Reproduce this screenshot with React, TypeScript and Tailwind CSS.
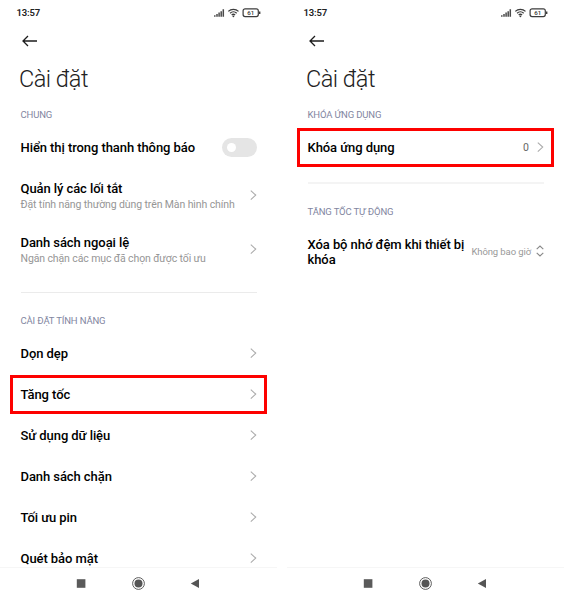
import type { ReactNode } from "react";

function StatusBar() {
  return (
    <div className="flex h-[25px] shrink-0 items-center justify-between pl-[16.5px] pr-[16px]">
      <span className="text-[9.5px] font-semibold leading-none tracking-[-0.15px] text-[#222]">13:57</span>
      <svg width="48" height="11" viewBox="0 0 48 11" fill="none">
        <path d="M1.8 8.2v1.6M4 7v2.8M6.1 5.6v4.2M8.2 4.2v5.6M10.3 2.2v7.6" stroke="#4a4a4a" strokeWidth="1.5" />
        <path d="M15.3 4.4a7.3 7.3 0 0 1 10.2 0M17.1 6.3a4.7 4.7 0 0 1 6.6 0M18.7 8a2.5 2.5 0 0 1 3.4 0" stroke="#3c3c3c" strokeWidth="1.3" />
        <circle cx="20.4" cy="9.3" r="0.9" fill="#3c3c3c" />
        <rect x="30.1" y="1.8" width="15.2" height="7.8" rx="2" stroke="#3c3c3c" strokeWidth="1.2" />
        <path d="M46.7 4.4v2.6" stroke="#3c3c3c" strokeWidth="1.4" />
        <text x="37.7" y="8" textAnchor="middle" fontSize="6.2" fontWeight="500" fill="#333" fontFamily="Roboto, sans-serif">61</text>
      </svg>
    </div>
  );
}

function Chevron() {
  return (
    <svg className="shrink-0" width="7" height="11" viewBox="0 0 7 11" fill="none">
      <path d="M0.8 0.6L5.7 5.1L0.8 9.6" stroke="#ababab" strokeWidth="1.1" />
    </svg>
  );
}

function Highlight() {
  return <div className="pointer-events-none absolute inset-x-[10px] inset-y-px border-[3px] border-[#fd0100]" />;
}

function Label({ className, children }: { className: string; children: ReactNode }) {
  return (
    <div className={`flex shrink-0 items-center pl-[20.5px] text-[9.5px] leading-none tracking-[-0.14px] text-[#82869f] ${className}`}>
      {children}
    </div>
  );
}

type RowProps = {
  title: ReactNode;
  sub?: string;
  height?: string;
  highlight?: boolean;
  children?: ReactNode;
};

function Row({ title, sub, height = "h-[41px]", highlight, children }: RowProps) {
  return (
    <div className={`relative flex shrink-0 items-center justify-between pl-[20.5px] pr-[20px] ${height}`}>
      <div className={sub ? "pt-[2px]" : ""}>
        <div className="whitespace-nowrap text-[13px] font-medium leading-[15px] tracking-[-0.075px] text-black">{title}</div>
        {sub && <div className="mt-px whitespace-nowrap text-[10.5px] leading-[15px] tracking-[-0.11px] text-[#969696]">{sub}</div>}
      </div>
      {children ?? <Chevron />}
      {highlight && <Highlight />}
    </div>
  );
}

function NavBar() {
  return (
    <div className="flex h-[33px] shrink-0 items-center border-t border-[#f6f6f6] pl-[76px]">
      <svg width="124" height="14" viewBox="0 0 124 14" fill="none">
        <rect x="0.8" y="2.2" width="8.6" height="8.6" fill="#5a5a5a" />
        <circle cx="62.5" cy="6.5" r="5.9" stroke="#4c4c4c" strokeWidth="0.9" />
        <circle cx="62.5" cy="6.5" r="4" fill="#555" />
        <path d="M114.8 6.5L123 2V11Z" fill="#555" />
      </svg>
    </div>
  );
}

function Phone({ children }: { children: ReactNode }) {
  return (
    <div className="flex h-[600px] w-[277px] shrink-0 flex-col overflow-hidden bg-white">
      <StatusBar />
      <div className="flex h-8 shrink-0 items-center pl-[22px]">
        <svg width="16" height="12" viewBox="0 0 16 12" fill="none">
          <path d="M15 6H1M6 1L1 6L6 11" stroke="#1c1c1c" strokeWidth="1.3" />
        </svg>
      </div>
      <h1 className="flex h-11 shrink-0 items-center pl-[19px] pt-px text-[23.5px] font-light leading-none tracking-[-0.5px] text-[#222]">Cài đặt</h1>
      <div className="flex min-h-0 flex-1 flex-col overflow-hidden">{children}</div>
      <NavBar />
    </div>
  );
}

export default function App() {
  return (
    <div className="flex h-[600px] w-[564px] gap-[10px] overflow-hidden bg-white font-[Roboto,sans-serif]">
      <Phone>
        <Label className="h-[26px] pt-[2px]">CHUNG</Label>
        <Row title="Hiển thị trong thanh thông báo">
          <div className="flex h-[19px] w-[35px] items-center rounded-full bg-[#e5e5e5] pl-[5px]">
            <div className="size-[9px] rounded-full bg-white" />
          </div>
        </Row>
        <Row title="Quản lý các lối tắt" sub="Đặt tính năng thường dùng trên Màn hình chính" height="h-[54px]" />
        <Row title="Danh sách ngoại lệ" sub="Ngăn chặn các mục đã chọn được tối ưu" height="h-[55px]" />
        <div className="mx-[20.5px] mt-[15px] h-px shrink-0 bg-[#ebebeb]" />
        <Label className="mt-[15px] h-[25px]">CÀI ĐẶT TÍNH NĂNG</Label>
        <Row title="Dọn dẹp" />
        <Row title="Tăng tốc" highlight />
        <Row title="Sử dụng dữ liệu" />
        <Row title="Danh sách chặn" />
        <Row title="Tối ưu pin" />
        <Row title="Quét bảo mật" />
      </Phone>
      <Phone>
        <Label className="h-[26px] pt-[2px]">KHÓA ỨNG DỤNG</Label>
        <Row title="Khóa ứng dụng" highlight>
          <div className="flex items-center gap-[8px] text-[10.5px] text-[#666]">
            0
            <Chevron />
          </div>
        </Row>
        <div className="mx-[20.5px] mt-[14px] h-[2px] shrink-0 bg-[#f4f4f4]" />
        <Label className="mt-[15px] h-[25px] tracking-[-0.07px]">TĂNG TỐC TỰ ĐỘNG</Label>
        <Row title={<>Xóa bộ nhớ đệm khi thiết bị<br />khóa</>} height="h-[55px]">
          <div className="flex items-center gap-[5px] whitespace-nowrap pt-px text-[9.5px] tracking-[-0.1px] text-[#999]">
            Không bao giờ
            <svg className="mb-[2px]" width="8" height="12" viewBox="0 0 8 12" fill="none">
              <path d="M0.7 4.2L4 1L7.3 4.2M0.7 7.8L4 11L7.3 7.8" stroke="#888" strokeWidth="1.1" />
            </svg>
          </div>
        </Row>
      </Phone>
    </div>
  );
}
